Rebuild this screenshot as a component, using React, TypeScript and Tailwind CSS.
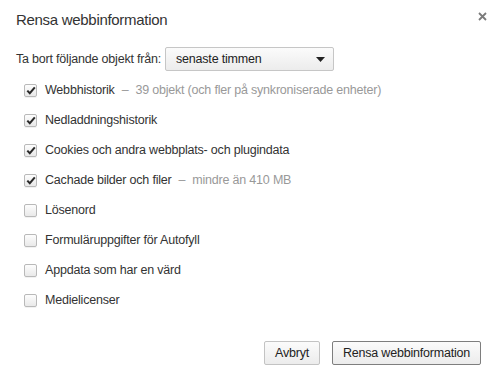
const items = [
  { label: "Webbhistorik", note: "39 objekt (och fler på synkroniserade enheter)", checked: true },
  { label: "Nedladdningshistorik", checked: true },
  { label: "Cookies och andra webbplats- och plugindata", checked: true },
  { label: "Cachade bilder och filer", note: "mindre än 410 MB", checked: true },
  { label: "Lösenord", checked: false },
  { label: "Formuläruppgifter för Autofyll", checked: false },
  { label: "Appdata som har en värd", checked: false },
  { label: "Medielicenser", checked: false },
];

function CheckBox({ checked }: { checked: boolean }) {
  return (
    <span className="flex h-[13px] w-[13px] shrink-0 items-center justify-center rounded-[2px] border border-[#b9b9b9] bg-gradient-to-b from-[#fdfdfd] to-[#e9e9e9] shadow-[0_1px_0_rgba(0,0,0,0.05)]">
      {checked && (
        <svg width="10" height="9" viewBox="0 0 10 9">
          <path d="M1.3 4.6 L3.8 7.2 L8.8 1.3" fill="none" stroke="#2a2a2a" strokeWidth="2" />
        </svg>
      )}
    </span>
  );
}

export default function App() {
  return (
    <div className="relative h-[379px] w-[499px] bg-white font-['Liberation_Sans',Arial,sans-serif] text-[12.5px] tracking-[-0.2px] text-[#333]">
      <div className="flex items-start justify-between pl-4 pr-[10px] pt-[11px]">
        <h1 className="text-[15px] leading-[18px] tracking-[-0.3px] text-[#333]">Rensa webbinformation</h1>
        <button className="mt-[-1px] p-[2px]" aria-label="Stäng">
          <svg width="9" height="9" viewBox="0 0 9 9">
            <path d="M1 1 L8 8 M8 1 L1 8" stroke="#7b7b7b" strokeWidth="1.8" />
          </svg>
        </button>
      </div>

      <div className="mt-[18px] flex items-center gap-[4px] pl-4">
        <span className="leading-4">Ta bort följande objekt från:</span>
        <div className="flex h-[24px] w-[169px] items-center justify-between rounded-[2px] border border-[#c6c6c6] bg-gradient-to-b from-[#fbfbfb] to-[#ececec] pl-[10px] pr-[8px] text-[#222]">
          <span>senaste timmen</span>
          <svg width="9" height="5" viewBox="0 0 9 5">
            <path d="M0 0 H9 L4.5 5 Z" fill="#222" />
          </svg>
        </div>
      </div>

      <ul className="mt-[4px] flex flex-col pl-6">
        {items.map((item) => (
          <li key={item.label} className="flex h-[30px] items-center gap-[8px]">
            <CheckBox checked={item.checked} />
            <span className="whitespace-nowrap">
              {item.label}
              {item.note && (
                <>
                  <span className="ml-[7px] text-[#999]">–</span>
                  <span className="ml-[7px] text-[#999]">{item.note}</span>
                </>
              )}
            </span>
          </li>
        ))}
      </ul>

      <div className="mt-[26px] flex justify-end gap-[12px] pr-[18px]">
        <button className="h-[24px] w-[56px] rounded-[2px] border border-[#c3c3c3] bg-gradient-to-b from-[#fbfbfb] to-[#ececec] text-[#222]">
          Avbryt
        </button>
        <button className="h-[24px] w-[149px] rounded-[2px] border border-[#7e7e7e] bg-gradient-to-b from-[#fbfbfb] to-[#ececec] text-[#222]">
          Rensa webbinformation
        </button>
      </div>
    </div>
  );
}
